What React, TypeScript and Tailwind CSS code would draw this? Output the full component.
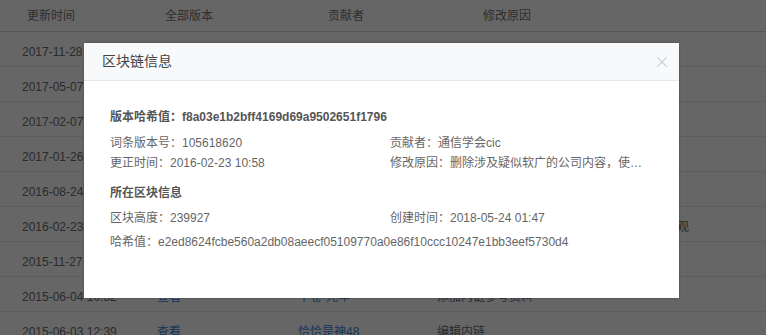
import { X } from "lucide-react";

const font = { fontFamily: '"Liberation Sans", "Noto Sans CJK SC", sans-serif' };

interface HistoryRow {
  time: string;
  contributor: string;
  reason: string;
}

const rows: HistoryRow[] = [
  { time: "2017-11-28 16:21", contributor: "星空之下", reason: "修改内链" },
  { time: "2017-05-07 09:14", contributor: "百科小编", reason: "更新基本信息" },
  { time: "2017-02-07 20:45", contributor: "通信学会cic", reason: "补充参考资料" },
  { time: "2017-01-26 11:03", contributor: "蓝色海岸", reason: "修改错别字" },
  { time: "2016-08-24 15:37", contributor: "恰恰是神48", reason: "添加图片" },
  { time: "2016-02-23 10:58", contributor: "通信学会cic", reason: "删除涉及疑似软广的公司内容，使词条更加客观" },
  { time: "2015-11-27 18:22", contributor: "百科ROBOT", reason: "编辑内链" },
  { time: "2015-06-04 10:32", contributor: "半卷·光年", reason: "添加内链参考资料" },
  { time: "2015-06-03 12:39", contributor: "恰恰是神48", reason: "编辑内链" },
];

function HistoryTable() {
  return (
    <div className="w-full bg-white text-[12px] text-[#6b6b6b]">
      <div className="flex h-[32px] items-center border-b border-[#d4d4d4] leading-[30px] text-[#737373]">
        <div className="w-[137px] pl-[27px]">更新时间</div>
        <div className="w-[141px] pl-[28px]">全部版本</div>
        <div className="w-[139px] pl-[50px]">贡献者</div>
        <div className="flex-1 pl-[66px]">修改原因</div>
      </div>
      {rows.map((row) => (
        <div key={row.time} className="flex h-[35px] border-b border-[#ececec] pt-[10px] leading-5">
          <div className="w-[137px] whitespace-nowrap pl-[22px]">{row.time}</div>
          <div className="w-[141px] pl-[20px] text-[#3a86dc]">查看</div>
          <div className="w-[139px] pl-[20px] text-[#3a86dc]">{row.contributor}</div>
          <div className="flex-1 whitespace-nowrap pl-[20px]">{row.reason}</div>
        </div>
      ))}
    </div>
  );
}

function BlockchainDialog() {
  return (
    <div className="absolute left-[84px] top-[43px] h-[255px] w-[595px] bg-white shadow-[0_0_2px_rgba(0,0,0,0.35)]">
      <div className="flex h-[38px] items-center justify-between border-b border-[#e6e6e6] bg-[#f8f9fb] pl-[18px] pr-[8px]">
        <span className="text-[14px] text-[#444]">区块链信息</span>
        <X className="h-[18px] w-[18px] text-[#c2c2c2]" strokeWidth={1.4} />
      </div>
      <div className="pl-[26px] pt-[26px] text-[12px] leading-5 text-[#666]">
        <div className="font-bold text-[#555]">版本哈希值：f8a03e1b2bff4169d69a9502651f1796</div>
        <div className="mt-[6px] grid grid-cols-[280px_258px]">
          <div>词条版本号：105618620</div>
          <div>贡献者：通信学会cic</div>
          <div>更正时间：2016-02-23 10:58</div>
          <div className="truncate">修改原因：删除涉及疑似软广的公司内容，使词条更加客观</div>
        </div>
        <div className="mt-[10px] font-bold text-[#555]">所在区块信息</div>
        <div className="mt-[5px] grid grid-cols-[280px_258px]">
          <div>区块高度：239927</div>
          <div>创建时间：2018-05-24 01:47</div>
        </div>
        <div className="mt-[4px]">哈希值：e2ed8624fcbe560a2db08aeecf05109770a0e86f10ccc10247e1bb3eef5730d4</div>
      </div>
    </div>
  );
}

export default function App() {
  return (
    <div className="relative h-[335px] w-[766px] overflow-hidden bg-white" style={font}>
      <HistoryTable />
      <div className="absolute inset-0 bg-black/60" />
      <BlockchainDialog />
    </div>
  );
}
